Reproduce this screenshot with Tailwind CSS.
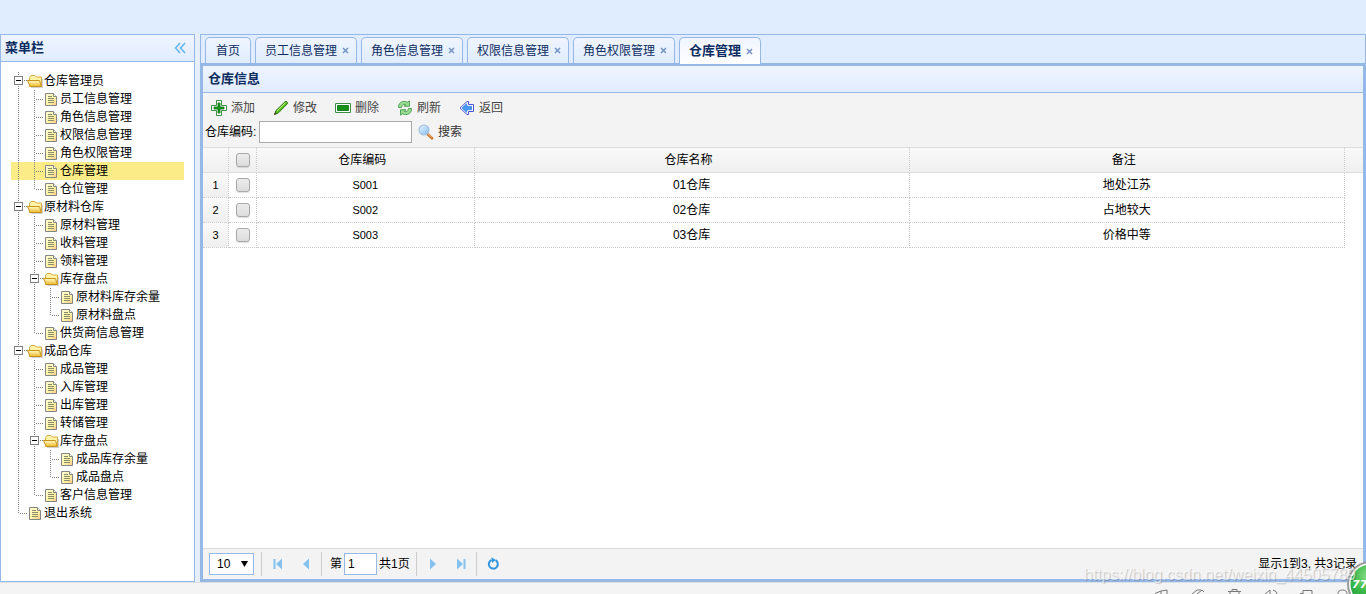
<!DOCTYPE html>
<html lang="zh-CN">
<head>
<meta charset="utf-8">
<title>仓库管理</title>
<script src="https://cdn.jsdelivr.net/npm/@tailwindcss/browser@4"></script>
</head>
<body class="relative flex h-screen flex-col overflow-hidden bg-[#e6eef8] font-['Liberation_Sans','Noto_Sans_CJK_SC',sans-serif] text-[12px] leading-[18px] text-black">

<svg class="absolute size-0" aria-hidden="true">
  <defs>
    <linearGradient id="gFolder" x1="0" y1="0" x2="0" y2="1"><stop offset="0" stop-color="#fffbc8"/><stop offset="1" stop-color="#f0b929"/></linearGradient>
    <linearGradient id="gPage" x1="0" y1="0" x2="1" y2="1"><stop offset="0" stop-color="#ffffd8"/><stop offset=".6" stop-color="#fff4a0"/><stop offset="1" stop-color="#fbc58c"/></linearGradient>
    <linearGradient id="gLens" x1="0" y1="0" x2="1" y2="1"><stop offset="0" stop-color="#f2faff"/><stop offset="1" stop-color="#7db8ee"/></linearGradient>
    <radialGradient id="gBall" cx=".45" cy=".3" r=".75"><stop offset="0" stop-color="#8fe08c"/><stop offset=".5" stop-color="#3dbb4c"/><stop offset="1" stop-color="#1f9a35"/></radialGradient>
    <symbol id="v" viewBox="0 0 16 18"><path d="M7.5 0V18" stroke="#808080" stroke-dasharray="1 1" shape-rendering="crispEdges"/></symbol>
    <symbol id="j" viewBox="0 0 16 18"><path d="M7.5 0V18M9 9.5H16" stroke="#808080" stroke-dasharray="1 1" shape-rendering="crispEdges"/></symbol>
    <symbol id="l" viewBox="0 0 16 18"><path d="M7.5 0V10M9 9.5H16" stroke="#808080" stroke-dasharray="1 1" shape-rendering="crispEdges"/></symbol>
    <symbol id="m" viewBox="0 0 16 18"><path d="M7.5 0V4M7.5 14V18M13 8.5H16" stroke="#808080" stroke-dasharray="1 1" shape-rendering="crispEdges"/><path d="M3.5 4.5h8v8h-8z" fill="#fff" stroke="#808080" shape-rendering="crispEdges"/><path d="M5 8.5h5" stroke="#000" shape-rendering="crispEdges"/></symbol>
    <symbol id="folder" viewBox="0 0 16 18"><path d="M2.500 14.500V5.500L4 3.500h4l1.500 1.500H14.500V14.500z" fill="#fff3a6" stroke="#d3aa45"/><path d="M.5 8.500H12.500L14.300 14.500H3.200z" fill="url(#gFolder)" stroke="#c8921e" stroke-linejoin="round"/><path d="M15.500 7v8.500H4" fill="none" stroke="#8a8a8a" stroke-opacity=".4"/></symbol>
    <symbol id="file" viewBox="0 0 16 18"><path d="M2.500 3.500h8l3 3v9h-11z" fill="url(#gPage)" stroke="#858585"/><path d="M10.500 3.500v3h3" fill="#fff" stroke="#858585"/><path d="M5 6.500h4M5 8.500h6M5 10.500h6M5 12.500h6" stroke="#8c8c6c" shape-rendering="crispEdges"/></symbol>
  </defs>
</svg>

<header class="h-[34px] shrink-0 bg-[#e0ecff]"></header>

<div class="flex min-h-0 flex-1 gap-[5px]">
  <aside class="flex w-[195px] shrink-0 flex-col border border-[#95b8e7] bg-white">
    <div class="flex h-[27px] shrink-0 items-center justify-between border-b border-[#95b8e7] bg-linear-to-b from-[#eff5ff] to-[#e0ecff] pl-1 pr-2">
      <h2 class="text-[13px] font-bold text-[#0e2d5f]">菜单栏</h2>
      <button aria-label="收起菜单" class="size-3"><svg viewBox="0 0 12 12" class="size-3"><path d="M6 1 1.500 6 6 11M11 1 6.500 6 11 11" fill="none" stroke="#5fb3ee" stroke-width="1.500"/></svg></button>
    </div>
    <ul id="tree" class="px-[10px] pt-[10px]"></ul>
  </aside>

  <main class="flex min-w-0 flex-1 flex-col border border-[#95b8e7] bg-[#e0ecff]">
    <nav class="flex h-[28px] shrink-0 gap-1 pl-1 pt-[2px] text-[#0e2d5f]">
      <button class="h-[26px] rounded-t-[5px] border border-b-0 border-[#95b8e7] bg-linear-to-b from-[#eff5ff] to-[#e0ecff] px-[10px]">首页</button>
      <div class="flex h-[26px] items-center gap-1 rounded-t-[5px] border border-b-0 border-[#95b8e7] bg-linear-to-b from-[#eff5ff] to-[#e0ecff] pl-[9px] pr-[6px]"><button>员工信息管理</button><button class="close size-[9px]" aria-label="关闭"></button></div>
      <div class="flex h-[26px] items-center gap-1 rounded-t-[5px] border border-b-0 border-[#95b8e7] bg-linear-to-b from-[#eff5ff] to-[#e0ecff] pl-[9px] pr-[6px]"><button>角色信息管理</button><button class="close size-[9px]" aria-label="关闭"></button></div>
      <div class="flex h-[26px] items-center gap-1 rounded-t-[5px] border border-b-0 border-[#95b8e7] bg-linear-to-b from-[#eff5ff] to-[#e0ecff] pl-[9px] pr-[6px]"><button>权限信息管理</button><button class="close size-[9px]" aria-label="关闭"></button></div>
      <div class="flex h-[26px] items-center gap-1 rounded-t-[5px] border border-b-0 border-[#95b8e7] bg-linear-to-b from-[#eff5ff] to-[#e0ecff] pl-[9px] pr-[6px]"><button>角色权限管理</button><button class="close size-[9px]" aria-label="关闭"></button></div>
      <div class="z-10 flex h-[27px] items-center gap-1 rounded-t-[5px] border border-b-0 border-[#95b8e7] bg-linear-to-b from-[#eff5ff] to-white pl-[9px] pr-[6px]"><button class="text-[13px] font-bold">仓库管理</button><button class="close size-[9px]" aria-label="关闭"></button></div>
    </nav>

    <section class="flex min-h-0 flex-1 flex-col border-x-2 border-b-2 border-t-3 border-[#95b8e7] bg-white">
      <h1 class="h-[27px] shrink-0 border-b border-[#95b8e7] bg-linear-to-b from-[#eff5ff] to-[#e0ecff] pl-[5px] text-[13px] leading-[26px] font-bold text-[#0e2d5f]">仓库信息</h1>

      <div class="flex shrink-0 flex-col gap-1 bg-[#f3f3f3] px-[2px] pt-[5px] pb-1">
        <div class="flex h-[19px] items-center gap-[18px] pl-[6px] text-[#444]">
          <button class="flex items-center gap-1"><svg viewBox="0 0 16 16" class="size-4"><path d="M5.500.5h5v5h5v5h-5v5h-5v-5h-5v-5h5z" fill="#fff" stroke="#3c8f45"/><path d="M7 3h2v4h4v2h-4v4h-2v-4h-4v-2h4z" fill="#15961c" stroke="#0d7a12" stroke-width=".8"/></svg>添加</button>
          <button class="flex items-center gap-1"><svg viewBox="0 0 16 16" class="size-4"><path d="M1.500 14.500 3 10.500 12 1.700q1-.7 2 .2t.2 2L5.500 12.800z" fill="#58bf22" stroke="#2d7a1c"/><path d="m4 11 8.500-8.300" stroke="#c6f07c"/><path d="m1 15 1.200-3 1.800 1.800z" fill="#4d4a2a"/></svg>修改</button>
          <button class="flex items-center gap-1"><svg viewBox="0 0 16 16" class="size-4"><path d="M.5 3.500h15v9H.5z" fill="#fff" stroke="#3c8f45"/><path d="M2.500 5.500h11v5h-11z" fill="#129318" stroke="#1a7f20"/></svg>删除</button>
          <button class="flex items-center gap-1"><svg viewBox="0 0 16 16" class="size-4" fill="#97dc91" stroke="#4a9a50" stroke-width=".9" stroke-linejoin="round"><path d="M1.500 7.500C1.300 3 4.500 1 8.500 1.500l2 .7L12.500.8v5.500H7l1.800-1.700C6.500 3.700 5 5 4.500 7.500z"/><path d="M14.500 8.500c.2 4.500-3 6.500-7 6l-2-.7-2 1.400V9.700H9l-1.800 1.700c2.300.9 3.800-.4 4.300-2.900z"/></svg>刷新</button>
          <button class="flex items-center gap-1"><svg viewBox="0 0 16 16" class="size-4"><path d="M1 8 8 1.500h1.500v3h5v7h-5v3H8z" fill="#fff" stroke="#4a55c8" stroke-linejoin="round"/><path d="M3 8l4.700-4.200V6.300h4.800v3.500H7.700v2.500z" fill="#459af0" stroke="#2770dc" stroke-width=".7"/></svg>返回</button>
        </div>
        <div class="flex h-[22px] items-center">
          <label for="code" class="w-[54px] whitespace-nowrap">仓库编码:</label>
          <input id="code" type="text" class="h-[22px] w-[153px] border border-[#a9a9a9] bg-white px-1 outline-none">
          <button class="ml-[6px] flex items-center gap-1 text-[#333]"><svg viewBox="0 0 16 16" class="size-4"><path d="m9.500 10 4.500 4.300" stroke="#c9742c" stroke-width="2.600" stroke-linecap="round"/><path d="m10 9.800 3.800 3.600" stroke="#f2bd76"/><circle cx="6" cy="6" r="4.900" fill="url(#gLens)" stroke="#a4c3e4" stroke-width="1.300"/></svg>搜索</button>
        </div>
      </div>

      <div class="min-h-0 flex-1">
        <table class="w-full table-fixed border-separate border-spacing-0 text-center [&_td]:border-b [&_td]:border-r [&_td]:border-dotted [&_td]:border-[#ccc] [&_td]:p-0 [&_tbody_tr>td:first-child]:bg-linear-to-b [&_tbody_tr>td:first-child]:from-[#f9f9f9] [&_tbody_tr>td:first-child]:to-[#efefef] [&_tbody_tr>td:last-child]:border-0 [&_th]:py-0 [&_th]:pl-0 [&_th]:font-normal">
          <colgroup><col class="w-[26px]"><col class="w-[28px]"><col class="w-3/16"><col><col><col class="w-[18px]"></colgroup>
          <thead>
            <tr class="h-[26px] bg-linear-to-b from-[#f9f9f9] to-[#efefef] [&>th]:border-y [&>th]:border-r [&>th]:border-y-[#ddd] [&>th]:border-r-[#ccc] [&>th]:[border-right-style:dotted] [&>th:last-child]:border-r-0">
              <th class="pr-0"></th><th class="pr-0"><input type="checkbox" aria-label="全选"></th><th class="pr-[6px]">仓库编码</th><th class="pr-[6px]">仓库名称</th><th class="pr-[6px]">备注</th><th class="pr-0"></th>
            </tr>
          </thead>
          <tbody>
            <tr class="h-[25px]"><td class="text-[11px]">1</td><td><input type="checkbox" aria-label="选择 S001"></td><td class="text-[11px]">S001</td><td>01仓库</td><td>地处江苏</td><td></td></tr>
            <tr class="h-[25px]"><td class="text-[11px]">2</td><td><input type="checkbox" aria-label="选择 S002"></td><td class="text-[11px]">S002</td><td>02仓库</td><td>占地较大</td><td></td></tr>
            <tr class="h-[25px]"><td class="text-[11px]">3</td><td><input type="checkbox" aria-label="选择 S003"></td><td class="text-[11px]">S003</td><td>03仓库</td><td>价格中等</td><td></td></tr>
          </tbody>
        </table>
      </div>

      <footer class="flex h-[31px] shrink-0 items-center border-t border-[#ddd] bg-[#f3f3f3] pl-[6px] pr-[6px]">
        <div class="relative">
          <select aria-label="每页条数" class="block h-[22px] w-[45px] appearance-none border border-[#95b8e7] bg-white pl-[7px] text-[12px]"><option>10</option><option>20</option></select>
          <svg viewBox="0 0 7 6" class="pointer-events-none absolute right-[6px] top-2 h-[6px] w-[7px]"><path d="M0 0h7L3.500 6z"/></svg>
        </div>
        <span class="ml-[7px] h-6 w-px bg-[#ccc]"></span>
        <button aria-label="首页" class="ml-[9px]"><svg viewBox="0 0 14 14" class="size-[14px]" fill="#84c1ee"><path d="M2.500 2h2v10h-2zM11 1.500v11L5 7z"/></svg></button>
        <button aria-label="上一页" class="ml-[14px]"><svg viewBox="0 0 14 14" class="size-[14px]" fill="#84c1ee"><path d="M10 1.500v11L4 7z"/></svg></button>
        <span class="ml-[8px] h-6 w-px bg-[#ccc]"></span>
        <label for="page" class="ml-[8px]">第</label>
        <input id="page" type="text" value="1" class="ml-[2px] h-[22px] w-[33px] border border-[#95b8e7] bg-white px-[3px] outline-none">
        <span class="ml-[2px]">共1页</span>
        <span class="ml-[6px] h-6 w-px bg-[#ccc]"></span>
        <button aria-label="下一页" class="ml-[9px]"><svg viewBox="0 0 14 14" class="size-[14px]" fill="#84c1ee"><path d="M4 1.500v11l6-5.500z"/></svg></button>
        <button aria-label="末页" class="ml-[14px]"><svg viewBox="0 0 14 14" class="size-[14px]" fill="#84c1ee"><path d="M3 1.500v11l6-5.500zM9.500 2h2v10h-2z"/></svg></button>
        <span class="ml-[8px] h-6 w-px bg-[#ccc]"></span>
        <button aria-label="刷新" class="ml-[9px]"><svg viewBox="0 0 14 14" class="size-[14px]"><path d="M9.500 3.200a4.500 4.500 0 1 1-4 -.2" fill="none" stroke="#2f95df" stroke-width="2"/><path d="M5.500.3 9.700 3 6 6z" fill="#2f95df"/></svg></button>
        <span class="ml-auto">显示1到3, 共3记录</span>
      </footer>
    </section>
  </main>
</div>

<div class="flex h-3 shrink-0 items-end justify-end gap-[21px] overflow-hidden border-t border-[#dcdfe3] bg-[#f4f4f4] pr-4">
  <svg viewBox="0 0 15 5" class="h-[5px] w-[15px]" fill="none" stroke="#777"><path d="M0 4.500 6 2v3M6 2l6-1v4"/></svg>
  <svg viewBox="0 0 15 5" class="h-[5px] w-[15px]" fill="none" stroke="#777"><path d="M1 5 6 1h4M6 5l5-4 2 2"/></svg>
  <svg viewBox="0 0 15 5" class="h-[5px] w-[15px]" fill="none" stroke="#777"><path d="M5 2V.5h5V2M1 2.500h13M3 3v2M12 3v2"/></svg>
  <svg viewBox="0 0 15 5" class="h-[5px] w-[15px]" fill="none" stroke="#777"><path d="M2 5 7 1v4M10 1q4 1 4 4"/></svg>
  <svg viewBox="0 0 15 5" class="h-[5px] w-[15px]" fill="none" stroke="#777"><path d="M4 5V1.500h9V5M1 4.500h3"/></svg>
  <svg viewBox="0 0 15 5" class="h-[5px] w-[15px]" fill="none" stroke="#777"><path d="M3 5q0-4 4.500-4T12 5"/></svg>
</div>

<button aria-label="77" class="absolute -right-[28px] -bottom-[14px] size-[47px]">
  <svg viewBox="0 0 47 47" class="size-[47px]"><circle cx="23.500" cy="23.500" r="22.500" fill="#fff" stroke="#9a9a9a" stroke-width="2"/><circle cx="23.500" cy="23.500" r="20" fill="url(#gBall)"/><text x="5" y="27" fill="#fff" font-family="DejaVu Sans" font-size="11" font-style="italic" font-weight="700">77</text></svg>
</button>
<p class="pointer-events-none absolute bottom-[10px] right-[10px] text-[16px] leading-[18px] text-white/60 [text-shadow:1px_1px_1px_rgba(0,0,0,0.2)]">https://blog.csdn.net/weixin_44505789</p>

<script>
  // Each row: [indent cells, icon, label]. v line, j branch, l last branch, m expanded node.
  const rows = [
    ["m", "folder", "仓库管理员"],
    ["vj", "file", "员工信息管理"], ["vj", "file", "角色信息管理"], ["vj", "file", "权限信息管理"],
    ["vj", "file", "角色权限管理"], ["vj", "file", "仓库管理", true], ["vl", "file", "仓位管理"],
    ["m", "folder", "原材料仓库"],
    ["vj", "file", "原材料管理"], ["vj", "file", "收料管理"], ["vj", "file", "领料管理"],
    ["vm", "folder", "库存盘点"], ["vvj", "file", "原材料库存余量"], ["vvl", "file", "原材料盘点"],
    ["vl", "file", "供货商信息管理"],
    ["m", "folder", "成品仓库"],
    ["vj", "file", "成品管理"], ["vj", "file", "入库管理"], ["vj", "file", "出库管理"], ["vj", "file", "转储管理"],
    ["vm", "folder", "库存盘点"], ["vvj", "file", "成品库存余量"], ["vvl", "file", "成品盘点"],
    ["vl", "file", "客户信息管理"],
    ["l", "file", "退出系统"],
  ];
  const cell = id => `<svg class="h-[18px] w-4 shrink-0"><use href="#${id}"/></svg>`;
  document.getElementById("tree").innerHTML = rows.map(([lines, icon, label, on]) =>
    `<li class="${on ? "bg-[#fbec88]" : ""}"><a href="#" class="flex h-[18px] whitespace-nowrap">${[...lines].map(cell).join("")}${cell(icon)}<span class="pl-px">${label}</span></a></li>`).join("");
  document.querySelectorAll(".close").forEach(b => b.innerHTML = '<svg viewBox="0 0 9 9" class="block size-[9px]"><path d="m2 2 5 5m0-5-5 5" stroke="#6d8fc4" stroke-width="1.4"/></svg>');
  document.querySelectorAll("input[type=checkbox]").forEach(c => c.className = "block mx-auto size-[14px] appearance-none rounded-[3px] border border-[#a8a8a8] bg-linear-to-b from-[#ececec] to-[#dcdcdc] shadow-[0_1px_1px_rgba(0,0,0,0.12)]");
</script>
</body>
</html>
